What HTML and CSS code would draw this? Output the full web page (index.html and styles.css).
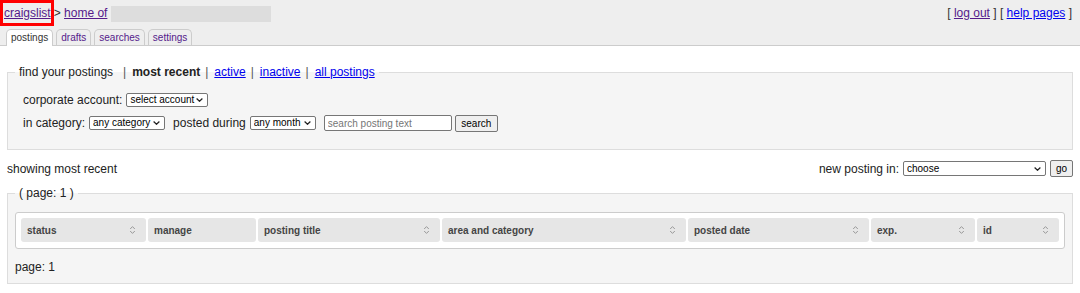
FILE: index.html
```html
<!DOCTYPE html>
<html lang="en">
<head>
<meta charset="utf-8">
<title>craigslist account</title>
<link rel="stylesheet" href="styles.css">
</head>
<body>
<header class="top">
  <div class="topbar">
    <div class="crumbs"><span class="cl-box"><a class="visited" href="#">craigslist</a></span>&gt; <a class="visited" href="#">home of</a> <span class="redacted"></span></div>
    <div class="userlinks">[ <a class="visited" href="#">log out</a> ] [ <a href="#">help pages</a> ]</div>
  </div>
  <nav class="tabs">
    <span class="tab active">postings</span>
    <a class="tab" href="#">drafts</a>
    <a class="tab" href="#">searches</a>
    <a class="tab" href="#">settings</a>
  </nav>
</header>

<fieldset class="box find">
  <legend>find your postings<span class="sep first">|</span><b>most recent</b><span class="sep">|</span><a href="#">active</a><span class="sep">|</span><a href="#">inactive</a><span class="sep">|</span><a href="#">all postings</a></legend>
  <div class="filters">
    <div class="frow">
      <label>corporate account:</label>
      <span class="selwrap"><select class="sel-account"><option>select account</option></select><svg class="chev" viewBox="0 0 7 4" width="7" height="4"><path d="M0.6 0.5 L3.5 3.3 L6.4 0.5"/></svg></span>
    </div>
    <div class="frow">
      <label>in category:</label>
      <span class="selwrap"><select class="sel-cat"><option>any category</option></select><svg class="chev" viewBox="0 0 7 4" width="7" height="4"><path d="M0.6 0.5 L3.5 3.3 L6.4 0.5"/></svg></span>
      <label class="gap">posted during</label>
      <span class="selwrap"><select class="sel-month"><option>any month</option></select><svg class="chev" viewBox="0 0 7 4" width="7" height="4"><path d="M0.6 0.5 L3.5 3.3 L6.4 0.5"/></svg></span>
      <input class="search-text" type="text" placeholder="search posting text">
      <button class="btn-search" type="button">search</button>
    </div>
  </div>
</fieldset>

<div class="postrow">
  <div>showing most recent</div>
  <div class="newpost">
    <label>new posting in:</label>
    <span class="selwrap"><select class="sel-choose"><option>choose</option></select><svg class="chev" viewBox="0 0 7 4" width="7" height="4"><path d="M0.6 0.5 L3.5 3.3 L6.4 0.5"/></svg></span>
    <button class="btn-go" type="button">go</button>
  </div>
</div>

<fieldset class="box results">
  <legend>( page: 1 )</legend>
  <div class="tablebox">
    <div class="thead">
      <div class="th">status<svg class="sort" viewBox="0 0 7 10" width="7" height="10"><path d="M1.2 4 L3.5 1.6 L5.8 4 M1.2 6 L3.5 8.4 L5.8 6"/></svg></div>
      <div class="th">manage</div>
      <div class="th">posting title<svg class="sort" viewBox="0 0 7 10" width="7" height="10"><path d="M1.2 4 L3.5 1.6 L5.8 4 M1.2 6 L3.5 8.4 L5.8 6"/></svg></div>
      <div class="th">area and category<svg class="sort" viewBox="0 0 7 10" width="7" height="10"><path d="M1.2 4 L3.5 1.6 L5.8 4 M1.2 6 L3.5 8.4 L5.8 6"/></svg></div>
      <div class="th">posted date<svg class="sort" viewBox="0 0 7 10" width="7" height="10"><path d="M1.2 4 L3.5 1.6 L5.8 4 M1.2 6 L3.5 8.4 L5.8 6"/></svg></div>
      <div class="th">exp.<svg class="sort" viewBox="0 0 7 10" width="7" height="10"><path d="M1.2 4 L3.5 1.6 L5.8 4 M1.2 6 L3.5 8.4 L5.8 6"/></svg></div>
      <div class="th">id<svg class="sort" viewBox="0 0 7 10" width="7" height="10"><path d="M1.2 4 L3.5 1.6 L5.8 4 M1.2 6 L3.5 8.4 L5.8 6"/></svg></div>
    </div>
  </div>
  <div class="pageinfo">page: 1</div>
</fieldset>
</body>
</html>
```

FILE: styles.css
```css
* { box-sizing: border-box; }

body {
  margin: 0;
  font-family: "Liberation Sans", Arial, sans-serif;
  font-size: 12px;
  color: #222;
  background: #fff;
}

a { color: #0000ee; }
a.visited { color: #551a8b; }

/* header */
.top {
  background: #eee;
  border-bottom: 1px solid #ccc;
}
.topbar {
  display: flex;
  justify-content: space-between;
  align-items: flex-start;
  height: 26px;
}
.crumbs {
  line-height: 26px;
  white-space: nowrap;
  color: #333;
}
.cl-box {
  display: inline-block;
  vertical-align: top;
  height: 26px;
  line-height: 20px;
  padding: 0 0 0 1px;
  border: 3px solid #f00;
}
.redacted {
  display: inline-block;
  vertical-align: middle;
  width: 160px;
  height: 16px;
  background: #ddd;
}
.userlinks {
  line-height: 26px;
  padding-right: 8px;
  color: #333;
}

.tabs {
  display: flex;
  align-items: flex-end;
  gap: 3px;
  padding-left: 6px;
  margin-top: 2px;
  height: 17px;
}
.tab {
  font-size: 10px;
  height: 16px;
  line-height: 16px;
  padding: 0 4px;
  border: 1px solid #ccc;
  border-bottom: none;
  border-radius: 5px 5px 0 0;
  background: #eee;
  color: #551a8b;
  text-decoration: none;
}
.tab.active {
  height: 17px;
  margin-bottom: -1px;
  background: #fff;
  color: #333;
}

/* fieldsets */
.box {
  margin: 0 7px;
  padding: 0 7px;
  border: 1px solid #ddd;
  background: #f5f5f5;
  min-width: 0;
}
.box legend {
  padding: 0 4px;
  line-height: 14px;
}
.find { margin-top: 19px; }
.sep {
  color: #555;
  margin: 0 6px 0 5px;
}
.sep.first { margin-left: 10px; }

.filters {
  padding: 13px 8px 18px;
  display: flex;
  flex-direction: column;
  gap: 7px;
}
.frow {
  display: flex;
  align-items: center;
  height: 16px;
  white-space: nowrap;
}
.frow .selwrap { margin-left: 4px; }
.frow .gap { margin-left: 8px; }

.selwrap {
  position: relative;
  display: inline-flex;
}
select {
  appearance: none;
  -webkit-appearance: none;
  font: 10px "Liberation Sans", Arial, sans-serif;
  color: #000;
  height: 14px;
  line-height: 12px;
  padding: 0 12px 0 3px;
  border: 1px solid #767676;
  border-radius: 2px;
  background: #fff;
}
.chev {
  position: absolute;
  right: 5px;
  top: 50%;
  margin-top: -2px;
  fill: none;
  stroke: #222;
  stroke-width: 1.2;
  pointer-events: none;
}
.sel-account { width: 82px; }
.sel-cat { width: 76px; }
.sel-month { width: 66px; }
.sel-choose { width: 143px; height: 15px; }
.newpost .selwrap { margin-left: 4px; }

.search-text {
  margin-left: 8px;
  width: 128px;
  height: 16px;
  padding: 0 3px;
  font: 10px "Liberation Sans", Arial, sans-serif;
  border: 1px solid #767676;
  border-radius: 2px;
  background: #fff;
}
.search-text::placeholder { color: #757575; }

button {
  font: 10px "Liberation Sans", Arial, sans-serif;
  color: #000;
  height: 17px;
  padding: 0;
  border: 1px solid #767676;
  border-radius: 2px;
  background: #efefef;
}
.btn-search { width: 43px; margin-left: 3px; }
.btn-go { width: 23px; margin-left: 4px; }

.postrow {
  display: flex;
  justify-content: space-between;
  align-items: center;
  height: 17px;
  margin: 10px 7px 0;
}
.newpost {
  display: flex;
  align-items: center;
}

.results {
  margin-top: 9px;
}
.tablebox {
  margin-top: 12px;
  background: #fff;
  border: 1px solid #ccc;
  border-radius: 3px;
  padding: 5px 5px 6px;
}
.thead {
  display: grid;
  grid-template-columns: 125fr 108fr 182fr 244fr 181fr 104fr 82fr;
  gap: 2px;
}
.th {
  display: flex;
  align-items: center;
  justify-content: space-between;
  height: 24px;
  padding: 0 10px 0 6px;
  background: #e6e6e6;
  border-radius: 3px;
  font-size: 10px;
  font-weight: bold;
  color: #444;
}
.sort {
  fill: none;
  stroke: #999;
  stroke-width: 1;
}
.pageinfo {
  margin-top: 11px;
  line-height: 14px;
  padding-bottom: 9px;
}
```
